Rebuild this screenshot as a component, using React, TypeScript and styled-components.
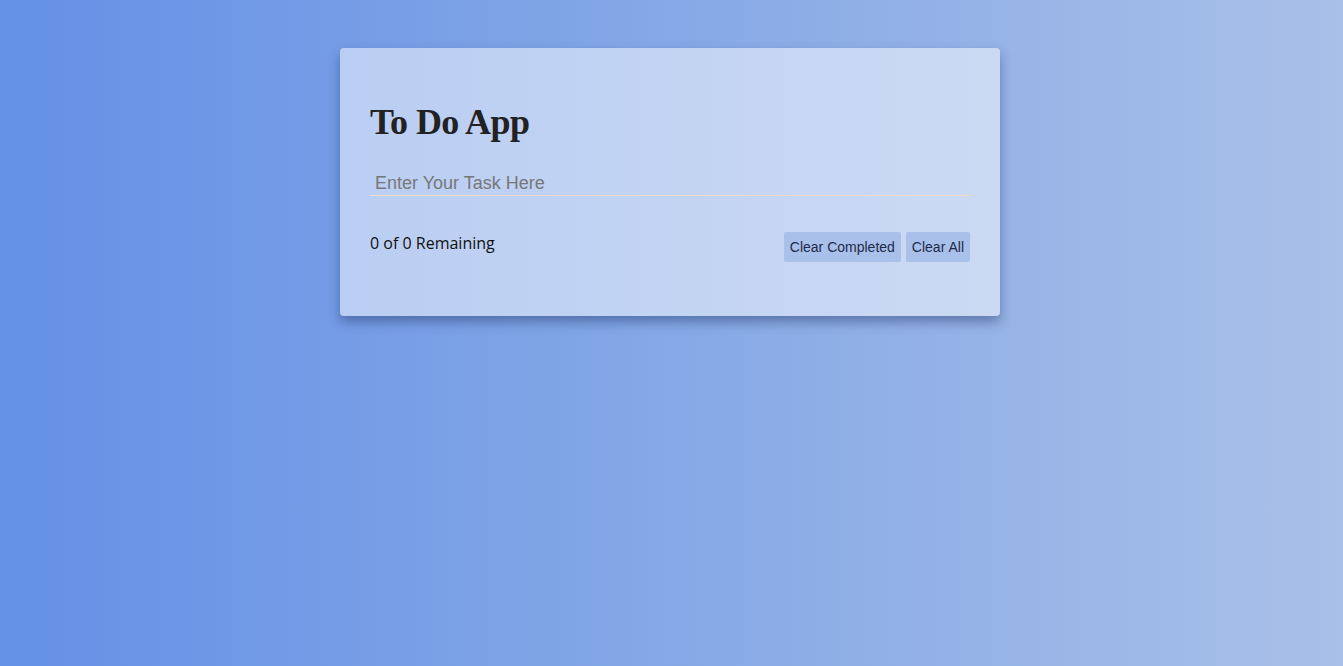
import React, { useState } from "react";
import styled, { createGlobalStyle } from "styled-components";

const Global = createGlobalStyle`
  html, body { margin: 0; padding: 0; }
  body { background: #a8bfe8; }
`;

const Page = styled.div`
  min-height: 100vh;
  box-sizing: border-box;
  padding: 48px 0 0 340px;
  background: linear-gradient(to right, #6490e6 0%, #82a6e6 45%, #a9c0e8 100%);
`;

const Card = styled.div`
  width: 660px;
  box-sizing: border-box;
  padding: 54px 30px 54px;
  background: rgba(255, 255, 255, 0.5);
  border-radius: 4px;
  box-shadow: 0 6px 12px rgba(30, 50, 100, 0.45);
`;

const Title = styled.h1`
  margin: 0 0 29px;
  font-family: "Liberation Serif", "Times New Roman", serif;
  font-weight: bold;
  font-size: 36px;
  letter-spacing: -0.6px;
  line-height: 40px;
  color: #222;
`;

const TaskInput = styled.input`
  display: block;
  width: 100%;
  box-sizing: border-box;
  padding: 2px 5px 1px;
  border: none;
  border-bottom: 1px solid #eedcc6;
  background: transparent;
  font-family: "Liberation Sans", Arial, sans-serif;
  font-size: 18px;
  color: #333;
  outline: none;
  &::placeholder { color: #777; }
`;

const Footer = styled.div`
  display: flex;
  justify-content: space-between;
  align-items: flex-start;
  margin-top: 36px;
`;

const Remaining = styled.span`
  font-family: "Open Sans", "Noto Sans", sans-serif;
  font-size: 16px;
  line-height: 22px;
  color: #111;
`;

const Actions = styled.div`
  display: flex;
  gap: 5px;
`;

const Button = styled.button`
  height: 30px;
  padding: 0 6px;
  border: none;
  border-radius: 2px;
  background: #a9c0ea;
  color: #1d2a4a;
  font-family: "Liberation Sans", Arial, sans-serif;
  font-size: 14px;
  cursor: pointer;
`;

export default function App() {
  const [task, setTask] = useState("");
  return (
    <>
      <Global />
      <Page>
        <Card>
          <Title>To Do App</Title>
          <TaskInput
            placeholder="Enter Your Task Here"
            value={task}
            onChange={(e) => setTask(e.target.value)}
          />
          <Footer>
            <Remaining>0 of 0 Remaining</Remaining>
            <Actions>
              <Button>Clear Completed</Button>
              <Button>Clear All</Button>
            </Actions>
          </Footer>
        </Card>
      </Page>
    </>
  );
}
